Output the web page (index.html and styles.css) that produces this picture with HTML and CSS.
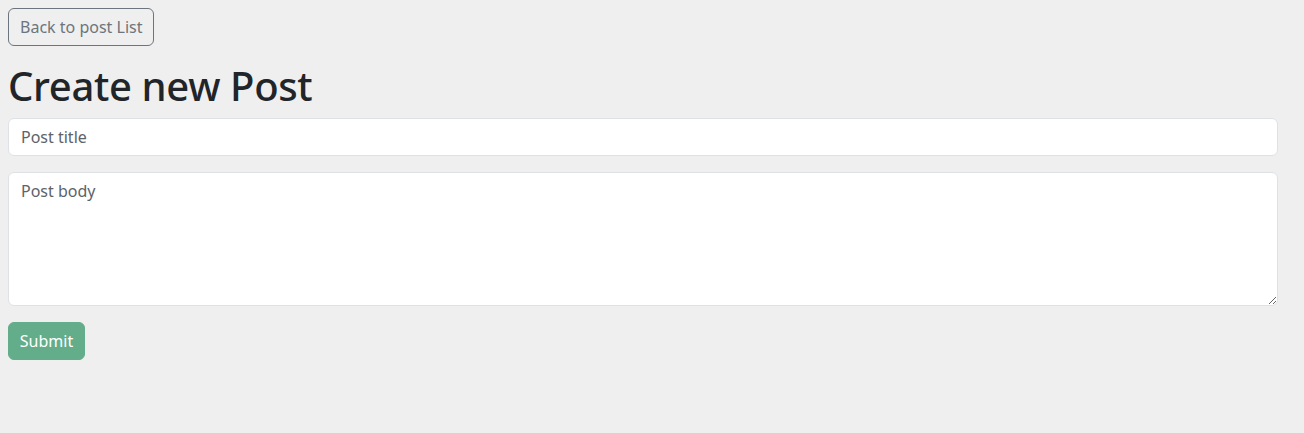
FILE: index.html
```html
<!DOCTYPE html>
<html>
<head>
<meta charset="utf-8">
<link rel="stylesheet" href="styles.css">
</head>
<body>
<div class="top">
  <button class="btn btn-outline">Back to post List</button>
</div>
<h1 class="title">Create new Post</h1>
<form class="form">
  <input class="field" type="text" placeholder="Post title">
  <textarea class="field area" placeholder="Post body"></textarea>
  <button class="btn btn-submit" type="button">Submit</button>
</form>
</body>
</html>
```

FILE: styles.css
```css
html, body {
  margin: 0;
  background: #efefef;
}
body {
  padding: 8px;
  font-family: "Noto Sans", "Open Sans", sans-serif;
  color: #212529;
}
.top {
  margin-bottom: 16px;
}
.btn {
  display: inline-block;
  box-sizing: border-box;
  height: 38px;
  font-family: inherit;
  font-size: 16px;
  line-height: 24px;
  padding: 6px 12px;
  border-radius: 6px;
  cursor: pointer;
}
.btn-outline {
  padding: 6px 11px;
  background: transparent;
  border: 1px solid #6c757d;
  color: #6c757d;
}
.title {
  margin: 0 0 8px;
  font-size: 40px;
  line-height: 48px;
  font-weight: 500;
  letter-spacing: -0.35px;
  color: #212529;
}
.form {
  display: flex;
  flex-direction: column;
  align-items: flex-start;
  gap: 16px;
  width: 1270px;
}
.field {
  box-sizing: border-box;
  width: 100%;
  height: 38px;
  padding: 6px 12px;
  font-family: inherit;
  font-size: 16px;
  line-height: 24px;
  background: #fff;
  border: 1px solid #dee2e6;
  border-radius: 6px;
  color: #212529;
  outline: none;
}
.field::placeholder {
  color: #5c636a;
  opacity: 1;
}
.area {
  height: 134px;
  resize: vertical;
}
.btn-submit {
  width: 77px;
  padding: 6px 0;
  text-align: center;
  background: #63ad8a;
  border: 1px solid #63ad8a;
  color: #fff;
}
```
